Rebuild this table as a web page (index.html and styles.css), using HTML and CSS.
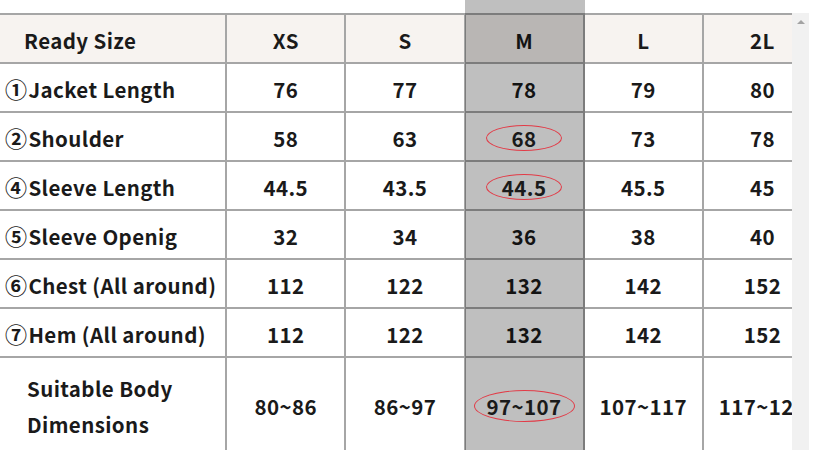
FILE: index.html
```html
<!DOCTYPE html>
<html lang="en">
<head>
<meta charset="utf-8">
<title>Ready Size chart</title>
<link rel="stylesheet" href="styles.css">
</head>
<body>
<div class="page">
  <div class="viewport">
    <div class="highlight"></div>
    <table class="chart">
      <colgroup>
        <col class="c-label"><col class="c-size"><col class="c-size"><col class="c-size"><col class="c-size"><col class="c-size">
      </colgroup>
      <thead>
        <tr class="head">
          <th class="label label-head">Ready Size</th>
          <th>XS</th><th>S</th><th>M</th><th>L</th><th>2L</th>
        </tr>
      </thead>
      <tbody>
        <tr><td class="label"><span class="num">①</span>Jacket Length</td><td>76</td><td>77</td><td>78</td><td>79</td><td>80</td></tr>
        <tr><td class="label"><span class="num">②</span>Shoulder</td><td>58</td><td>63</td><td><span class="mark">68</span></td><td>73</td><td>78</td></tr>
        <tr><td class="label"><span class="num">④</span>Sleeve Length</td><td>44.5</td><td>43.5</td><td><span class="mark">44.5</span></td><td>45.5</td><td>45</td></tr>
        <tr><td class="label"><span class="num">⑤</span>Sleeve Openig</td><td>32</td><td>34</td><td>36</td><td>38</td><td>40</td></tr>
        <tr><td class="label"><span class="num">⑥</span>Chest (All around)</td><td>112</td><td>122</td><td>132</td><td>142</td><td>152</td></tr>
        <tr><td class="label"><span class="num">⑦</span>Hem (All around)</td><td>112</td><td>122</td><td>132</td><td>142</td><td>152</td></tr>
        <tr class="tall"><td class="label label-body">Suitable Body<br>Dimensions</td><td>80~86</td><td>86~97</td><td><span class="mark mark-wide">97~107</span></td><td>107~117</td><td>117~127</td></tr>
      </tbody>
    </table>
  </div>
  <div class="scrollbar"><div class="arrow"></div></div>
</div>
</body>
</html>
```
FILE: styles.css
```css
html, body {
  margin: 0;
  padding: 0;
  background: #ffffff;
}
body {
  font-family: "Noto Sans CJK JP", "Noto Sans", sans-serif;
  color: #1a1a1a;
  overflow: hidden;
}
.page {
  display: flex;
  align-items: flex-start;
  height: 450px;
}
.viewport {
  position: relative;
  width: 792px;
  height: 450px;
  overflow: hidden;
  padding-top: 13px;
  box-sizing: border-box;
  flex: none;
}
.highlight {
  position: absolute;
  left: 465px;
  width: 120px;
  top: 0;
  bottom: 0;
  background: rgba(0, 0, 0, 0.25);
  z-index: 1;
  pointer-events: none;
}
.chart {
  border-collapse: collapse;
  table-layout: fixed;
  width: 823px;
  font-size: 20.5px;
  font-weight: 700;
  letter-spacing: 0.4px;
}
.c-label { width: 226px; }
.c-size { width: 119px; }
.chart th, .chart td {
  border: 2px solid #a6a6a6;
  height: 45px;
  padding: 2px 0 0;
  text-align: center;
  vertical-align: middle;
  font-weight: 700;
  line-height: 24px;
}
.chart tr > :first-child { border-left: none; }
.head th { background: #f7f3f0; }
.label { text-align: left !important; padding-left: 5px !important; }
.num { font-size: 22px; margin-right: 1px; }
.label-head { padding-left: 24px !important; }
.label-body { padding-left: 27px !important; line-height: 36px !important; }
.chart .tall td { height: 96px; padding-top: 0; }
.mark {
  position: relative;
  z-index: 2;
  display: inline-block;
  width: 74px;
  height: 24px;
  line-height: 24px;
  border: 1.5px solid #e23b47;
  border-radius: 50%;
}
.mark-wide {
  width: 99px;
  height: 30px;
  line-height: 30px;
}
.scrollbar {
  flex: none;
  width: 17px;
  height: 437px;
  margin-top: 13px;
  background: #f1f1f1;
  position: relative;
}
.arrow {
  margin: 7px auto 0;
  width: 0;
  height: 0;
  border-left: 4px solid transparent;
  border-right: 4px solid transparent;
  border-bottom: 4px solid #a3a3a3;
}
```
